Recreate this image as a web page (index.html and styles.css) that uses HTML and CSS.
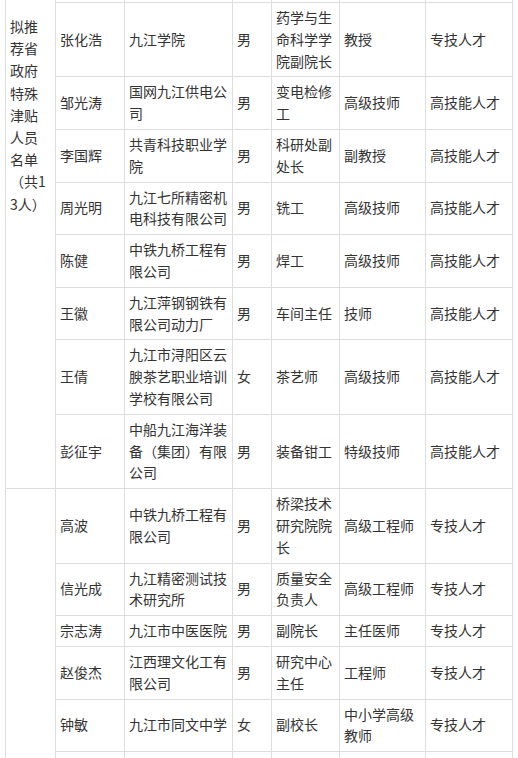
FILE: index.html
```html
<!DOCTYPE html>
<html lang="zh-CN">
<head>
<meta charset="utf-8">
<title>拟推荐省政府特殊津贴人员名单</title>
<link rel="stylesheet" href="styles.css">
</head>
<body>
<table class="list">
  <colgroup>
    <col class="c-group">
    <col class="c-name">
    <col class="c-org">
    <col class="c-sex">
    <col class="c-post">
    <col class="c-title">
    <col class="c-type">
  </colgroup>
  <tbody>
    <tr class="spacer">
      <td class="group" rowspan="9">拟推荐省政府特殊津贴人员名单（共13人）</td>
      <td></td><td></td><td></td><td></td><td></td><td></td>
    </tr>
    <tr><td>张化浩</td><td>九江学院</td><td>男</td><td>药学与生命科学学院副院长</td><td>教授</td><td>专技人才</td></tr>
    <tr><td>邹光涛</td><td>国网九江供电公司</td><td>男</td><td>变电检修工</td><td>高级技师</td><td>高技能人才</td></tr>
    <tr><td>李国辉</td><td>共青科技职业学院</td><td>男</td><td>科研处副处长</td><td>副教授</td><td>高技能人才</td></tr>
    <tr><td>周光明</td><td>九江七所精密机电科技有限公司</td><td>男</td><td>铣工</td><td>高级技师</td><td>高技能人才</td></tr>
    <tr><td>陈健</td><td>中铁九桥工程有限公司</td><td>男</td><td>焊工</td><td>高级技师</td><td>高技能人才</td></tr>
    <tr><td>王徽</td><td>九江萍钢钢铁有限公司动力厂</td><td>男</td><td>车间主任</td><td>技师</td><td>高技能人才</td></tr>
    <tr><td>王倩</td><td>九江市浔阳区云腴茶艺职业培训学校有限公司</td><td>女</td><td>茶艺师</td><td>高级技师</td><td>高技能人才</td></tr>
    <tr><td>彭征宇</td><td>中船九江海洋装备（集团）有限公司</td><td>男</td><td>装备钳工</td><td>特级技师</td><td>高技能人才</td></tr>
    <tr>
      <td class="group" rowspan="7"></td>
      <td>高波</td><td>中铁九桥工程有限公司</td><td>男</td><td>桥梁技术研究院院长</td><td>高级工程师</td><td>专技人才</td>
    </tr>
    <tr><td>信光成</td><td>九江精密测试技术研究所</td><td>男</td><td>质量安全负责人</td><td>高级工程师</td><td>专技人才</td></tr>
    <tr><td>宗志涛</td><td>九江市中医医院</td><td>男</td><td>副院长</td><td>主任医师</td><td>专技人才</td></tr>
    <tr><td>赵俊杰</td><td>江西理文化工有限公司</td><td>男</td><td>研究中心主任</td><td>工程师</td><td>专技人才</td></tr>
    <tr><td>钟敏</td><td>九江市同文中学</td><td>女</td><td>副校长</td><td>中小学高级教师</td><td>专技人才</td></tr>
    <tr class="tail"><td></td><td></td><td></td><td></td><td></td><td></td></tr>
  </tbody>
</table>
</body>
</html>
```
FILE: styles.css
```css
html, body {
  margin: 0;
  padding: 0;
  background: #fff;
  overflow: hidden;
}

.list {
  border-collapse: collapse;
  table-layout: fixed;
  width: 507px;
  margin-left: 5px;
  font-family: "Noto Sans CJK SC", "Noto Sans", sans-serif;
  font-size: 14px;
  line-height: 21.8px;
  color: #333;
}

.c-group { width: 50px; }
.c-name { width: 69px; }
.c-org { width: 108px; }
.c-sex { width: 39px; }
.c-post { width: 68px; }
.c-title { width: 86px; }
.c-type { width: 87px; }

.list td {
  border: 1px solid #ddd;
  padding: 4px;
  vertical-align: middle;
  text-align: left;
  word-break: break-all;
}

.list .spacer td {
  border-top: none;
  padding: 0;
  height: 2px;
  line-height: 0;
}

.list .spacer td.group {
  vertical-align: top;
  padding: 15px 4px 4px 4px;
  line-height: 22.2px;
}

.list .tail td {
  height: 60px;
}
```
